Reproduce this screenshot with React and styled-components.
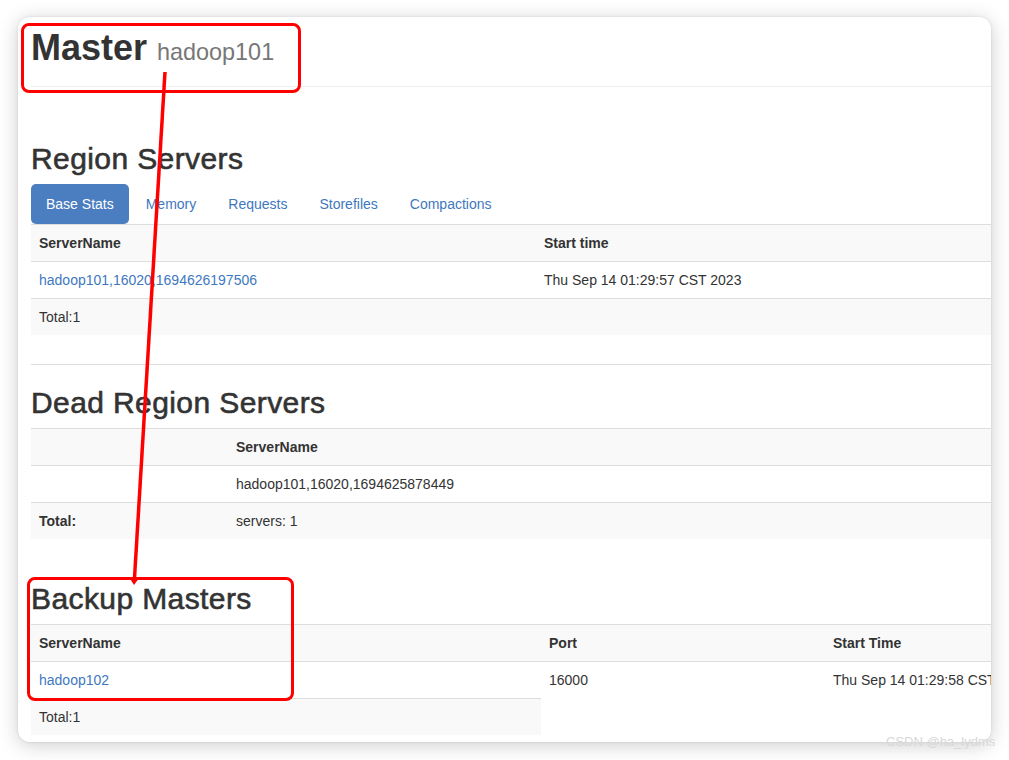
import React from 'react';
import styled, { createGlobalStyle } from 'styled-components';

const GlobalStyle = createGlobalStyle`
  html, body {
    margin: 0;
    padding: 0;
    background: #fff;
  }
  body {
    font-family: "Liberation Sans", Arial, Helvetica, sans-serif;
    color: #333;
    font-size: 14px;
    line-height: 20px;
  }
  * {
    box-sizing: border-box;
  }
`;

const Page = styled.div`
  position: relative;
  width: 1009px;
  height: 760px;
  padding: 17px 18px 0 18px;
  overflow: hidden;
`;

const Window = styled.div`
  width: 973px;
  height: 725px;
  background: #fff;
  border-radius: 12px;
  box-shadow: 0 0 3px rgba(0, 0, 0, 0.1), 0 3px 20px rgba(0, 0, 0, 0.2);
  overflow: hidden;
`;

const Content = styled.div`
  width: 1320px;
  padding-left: 13px;
`;

const PageHeader = styled.div`
  padding: 11px 0 13px;
  border-bottom: 1px solid #eee;
`;

const Title = styled.h1`
  margin: 0;
  font-size: 36px;
  line-height: 39.6px;
  font-weight: 700;
  color: #333;

  small {
    font-size: 65%;
    font-weight: 400;
    color: #777;
  }
`;

const SectionTitle = styled.h2`
  margin: ${(p) => p.$top}px 0 9px;
  font-size: 30px;
  line-height: 33px;
  font-weight: 400;
  letter-spacing: 0.4px;
  color: #333;
  -webkit-text-stroke: 0.6px #333;
`;

const Pills = styled.ul`
  display: flex;
  gap: 2px;
  list-style: none;
  margin: 0;
  padding: 0;
`;

const Pill = styled.a`
  display: block;
  padding: 10px 15px;
  font-size: 14px;
  line-height: 20px;
  border-radius: 5px;
  text-decoration: none;
  color: ${(p) => (p.$active ? '#fff' : '#3e78c0')};
  background: ${(p) => (p.$active ? '#4a7ec0' : 'transparent')};
`;

const Table = styled.table`
  width: 100%;
  border-collapse: collapse;
  border-spacing: 0;
  table-layout: fixed;

  th,
  td {
    padding: 8px;
    line-height: 20px;
    font-size: 14px;
    text-align: left;
    vertical-align: top;
    border-top: 1px solid #ddd;
    white-space: nowrap;
    overflow: hidden;
  }

  th {
    font-weight: 700;
  }

  tr:nth-child(odd) > th,
  tr:nth-child(odd) > td {
    background: #f9f9f9;
  }
`;

const Th = styled.th`
  width: ${(p) => (p.$w ? `${p.$w}px` : 'auto')};
`;

const Link = styled.a`
  color: #3e78c0;
  text-decoration: none;
`;

const Rule = styled.hr`
  margin: 29px 0 0;
  border: 0;
  border-top: 1px solid #ddd;
`;

const Callout = styled.div`
  position: absolute;
  left: ${(p) => p.$x}px;
  top: ${(p) => p.$y}px;
  width: ${(p) => p.$w}px;
  height: ${(p) => p.$h}px;
  border: 3px solid #f00;
  border-radius: 8px;
  pointer-events: none;
`;

const ArrowLayer = styled.svg`
  position: absolute;
  left: 0;
  top: 0;
  pointer-events: none;
`;

const Watermark = styled.div`
  position: absolute;
  left: 886px;
  top: 734px;
  font-size: 13px;
  line-height: 16px;
  color: #d8d8d8;
  white-space: nowrap;
`;

const tabs = ['Base Stats', 'Memory', 'Requests', 'Storefiles', 'Compactions'];

const App = () => (
  <>
    <GlobalStyle />
    <Page>
      <Window>
        <Content>
          <PageHeader>
            <Title>
              Master <small>hadoop101</small>
            </Title>
          </PageHeader>

          <SectionTitle $top={55}>Region Servers</SectionTitle>
          <Pills>
            {tabs.map((t, i) => (
              <li key={t}>
                <Pill $active={i === 0}>{t}</Pill>
              </li>
            ))}
          </Pills>
          <Table>
            <tbody>
              <tr>
                <Th $w={505}>ServerName</Th>
                <Th>Start time</Th>
              </tr>
              <tr>
                <td>
                  <Link>hadoop101,16020,1694626197506</Link>
                </td>
                <td>Thu Sep 14 01:29:57 CST 2023</td>
              </tr>
              <tr>
                <td>Total:1</td>
                <td></td>
              </tr>
            </tbody>
          </Table>

          <Rule />

          <SectionTitle $top={21}>Dead Region Servers</SectionTitle>
          <Table>
            <tbody>
              <tr>
                <Th $w={197}></Th>
                <Th>ServerName</Th>
              </tr>
              <tr>
                <td></td>
                <td>hadoop101,16020,1694625878449</td>
              </tr>
              <tr>
                <th>Total:</th>
                <td>servers: 1</td>
              </tr>
            </tbody>
          </Table>

          <SectionTitle $top={43}>Backup Masters</SectionTitle>
          <Table>
            <tbody>
              <tr>
                <Th $w={510}>ServerName</Th>
                <Th $w={284}>Port</Th>
                <Th>Start Time</Th>
              </tr>
              <tr>
                <td>
                  <Link>hadoop102</Link>
                </td>
                <td>16000</td>
                <td>Thu Sep 14 01:29:58 CST 2023</td>
              </tr>
              <tr>
                <td>Total:1</td>
              </tr>
            </tbody>
          </Table>
        </Content>
      </Window>

      <Callout $x={21} $y={23} $w={280} $h={70} />
      <Callout $x={27} $y={577} $w={267} $h={124} />
      <ArrowLayer width="1009" height="760" viewBox="0 0 1009 760">
        <line x1="165" y1="72" x2="134.5" y2="578" stroke="#f00" strokeWidth="3.5" />
        <polygon points="134,585 129,577 139.5,577.5" fill="#f00" />
      </ArrowLayer>
      <Watermark>CSDN @ha_lydms</Watermark>
    </Page>
  </>
);

export default App;
